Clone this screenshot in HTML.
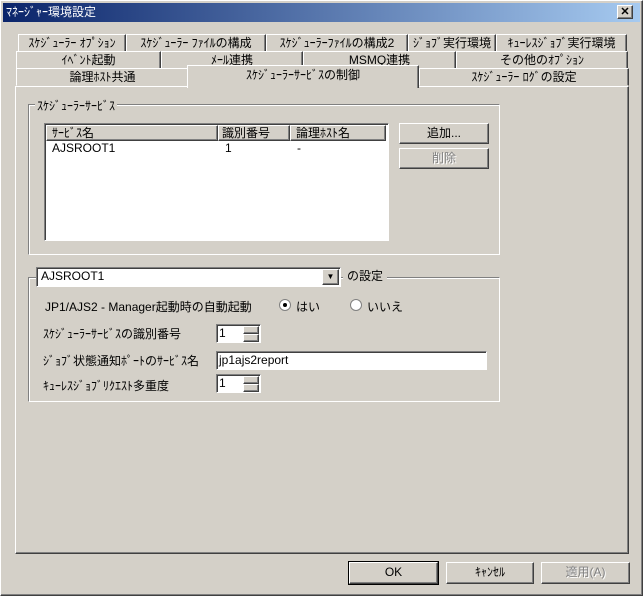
<!DOCTYPE html>
<html><head><meta charset="utf-8"><style>
*{box-sizing:border-box;margin:0;padding:0}
body{width:643px;height:596px;background:#d4d0c8;font-family:"Liberation Sans","Noto Sans CJK JP",sans-serif;font-size:12px;color:#000;position:relative;overflow:hidden}
.a{position:absolute;white-space:nowrap}
.out{border:1px solid;border-color:#fff #404040 #404040 #fff;box-shadow:inset -1px -1px #808080}
.in{border:1px solid;border-color:#808080 #fff #fff #808080;box-shadow:inset 1px 1px #404040}
.tab{position:absolute;height:18px;border:1px solid;border-color:#fff #404040 transparent #fff;box-shadow:inset -1px 0 #808080;background:#d4d0c8;text-align:center;line-height:16px;white-space:nowrap;overflow:hidden}
.grp{position:absolute;border:1px solid;border-color:#808080 #fff #fff #808080;box-shadow:inset 1px 1px #fff,1px 1px #808080 inset}
.btn{position:absolute;background:#d4d0c8;text-align:center;line-height:18px}
</style></head><body>
<div class="a out" style="left:0;top:0;width:643px;height:596px"></div>
<div class="a" style="left:3px;top:3px;width:637px;height:19px;background:linear-gradient(90deg,#0a246a,#a6caf0);color:#fff;line-height:19px;padding-left:3px;font-size:12px">ﾏﾈｰｼﾞｬｰ環境設定</div>
<div class="a out" style="left:617px;top:5px;width:16px;height:14px;background:#d4d0c8;text-align:center;line-height:12px;font-weight:bold;font-size:11px">✕</div>

<div class="tab" style="left:18px;top:34px;width:108px">ｽｹｼﾞｭｰﾗｰ ｵﾌﾟｼｮﾝ</div>
<div class="tab" style="left:126px;top:34px;width:140px">ｽｹｼﾞｭｰﾗｰ ﾌｧｲﾙの構成</div>
<div class="tab" style="left:266px;top:34px;width:142px">ｽｹｼﾞｭｰﾗｰﾌｧｲﾙの構成2</div>
<div class="tab" style="left:408px;top:34px;width:88px">ｼﾞｮﾌﾞ実行環境</div>
<div class="tab" style="left:496px;top:34px;width:131px">ｷｭｰﾚｽｼﾞｮﾌﾞ実行環境</div>
<div class="tab" style="left:16px;top:51px;width:145px">ｲﾍﾞﾝﾄ起動</div>
<div class="tab" style="left:161px;top:51px;width:142px">ﾒｰﾙ連携</div>
<div class="tab" style="left:303px;top:51px;width:153px">MSMQ連携</div>
<div class="tab" style="left:456px;top:51px;width:172px">その他のｵﾌﾟｼｮﾝ</div>
<div class="tab" style="left:16px;top:68px;width:173px">論理ﾎｽﾄ共通</div>
<div class="tab" style="left:419px;top:68px;width:210px">ｽｹｼﾞｭｰﾗｰ ﾛｸﾞの設定</div>
<div class="a" style="left:15px;top:86px;width:614px;height:468px;border:1px solid;border-color:#fff #404040 #404040 #fff;box-shadow:inset -1px -1px #808080"></div>
<div class="tab" style="left:187px;top:65px;width:232px;height:23px;line-height:18px;border-bottom:none">ｽｹｼﾞｭｰﾗｰｻｰﾋﾞｽの制御</div>

<div class="grp" style="left:28px;top:104px;width:472px;height:151px"></div>
<div class="a" style="left:35px;top:97px;background:#d4d0c8;padding:0 2px">ｽｹｼﾞｭｰﾗｰｻｰﾋﾞｽ</div>
<div class="a in" style="left:44px;top:123px;width:345px;height:118px;background:#fff"></div>
<div class="a out" style="left:46px;top:125px;width:172px;height:16px;background:#d4d0c8;line-height:14px;padding-left:5px">ｻｰﾋﾞｽ名</div>
<div class="a out" style="left:218px;top:125px;width:72px;height:16px;background:#d4d0c8;line-height:14px;padding-left:3px">識別番号</div>
<div class="a out" style="left:290px;top:125px;width:96px;height:16px;background:#d4d0c8;line-height:14px;padding-left:5px">論理ﾎｽﾄ名</div>
<div class="a" style="left:52px;top:141px">AJSROOT1</div>
<div class="a" style="left:225px;top:141px">1</div>
<div class="a" style="left:297px;top:141px">-</div>
<div class="btn out" style="left:399px;top:123px;width:90px;height:21px">追加...</div>
<div class="btn out" style="left:399px;top:148px;width:90px;height:21px;color:#808080;text-shadow:1px 1px #fff">削除</div>

<div class="grp" style="left:28px;top:277px;width:472px;height:125px"></div>
<div class="a" style="left:343px;top:268px;background:#d4d0c8;padding:0 4px;line-height:16px">の設定</div>
<div class="a in" style="left:36px;top:267px;width:305px;height:20px;background:#fff;line-height:17px;padding-left:4px">AJSROOT1</div>
<div class="a out" style="left:322px;top:269px;width:17px;height:16px;background:#d4d0c8;font-size:8px;text-align:center;line-height:14px">▼</div>
<div class="a" style="left:45px;top:298px">JP1/AJS2 - Manager起動時の自動起動</div>
<div class="a" style="left:279px;top:299px;width:12px;height:12px;border-radius:50%;background:#fff;border:1px solid #808080"><div style="margin:3px;width:4px;height:4px;border-radius:50%;background:#000"></div></div>
<div class="a" style="left:296px;top:298px">はい</div>
<div class="a" style="left:350px;top:299px;width:12px;height:12px;border-radius:50%;background:#fff;border:1px solid #808080"></div>
<div class="a" style="left:367px;top:298px">いいえ</div>
<div class="a" style="left:43px;top:325px">ｽｹｼﾞｭｰﾗｰｻｰﾋﾞｽの識別番号</div>
<div class="a in" style="left:216px;top:324px;width:45px;height:19px;background:#fff;padding-left:2px;line-height:16px">1</div>
<div class="a out" style="left:243px;top:326px;width:16px;height:8px;background:#d4d0c8"></div>
<div class="a out" style="left:243px;top:334px;width:16px;height:8px;background:#d4d0c8"></div>
<div class="a" style="left:43px;top:352px">ｼﾞｮﾌﾞ状態通知ﾎﾟｰﾄのｻｰﾋﾞｽ名</div>
<div class="a in" style="left:216px;top:351px;width:271px;height:19px;background:#fff;padding-left:2px;line-height:16px">jp1ajs2report</div>
<div class="a" style="left:43px;top:377px">ｷｭｰﾚｽｼﾞｮﾌﾞﾘｸｴｽﾄ多重度</div>
<div class="a in" style="left:216px;top:374px;width:45px;height:19px;background:#fff;padding-left:2px;line-height:16px">1</div>
<div class="a out" style="left:243px;top:376px;width:16px;height:8px;background:#d4d0c8"></div>
<div class="a out" style="left:243px;top:384px;width:16px;height:8px;background:#d4d0c8"></div>

<div class="btn out" style="left:349px;top:562px;width:89px;height:22px;outline:1px solid #000">OK</div>
<div class="btn out" style="left:446px;top:562px;width:88px;height:22px">ｷｬﾝｾﾙ</div>
<div class="btn out" style="left:541px;top:562px;width:89px;height:22px;color:#808080;text-shadow:1px 1px #fff">適用(A)</div>
</body></html>
